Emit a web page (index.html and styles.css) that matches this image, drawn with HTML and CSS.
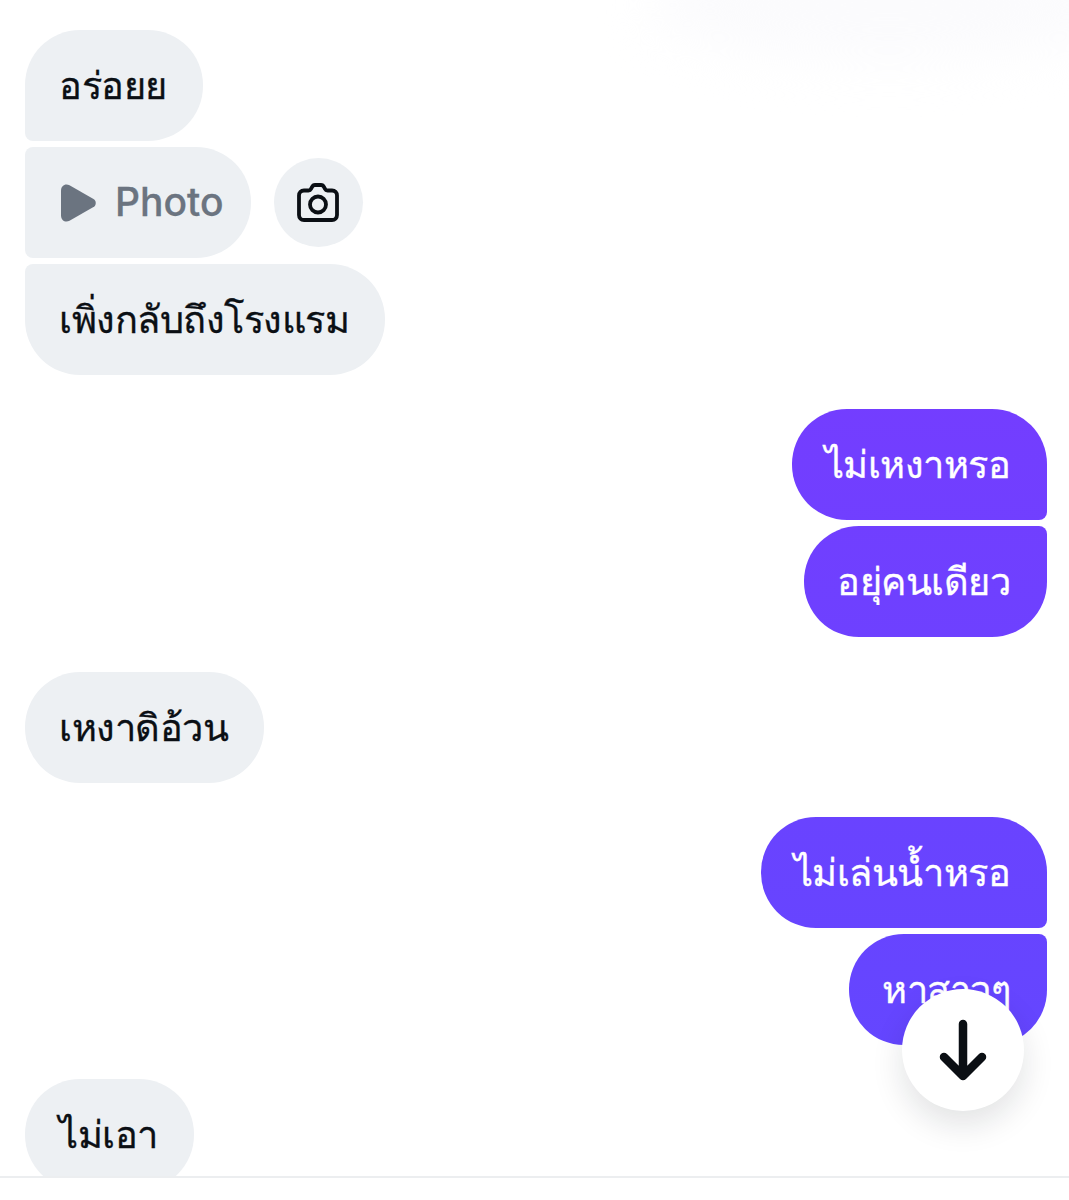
FILE: index.html
```html
<html>
<head>
  <title>Chat</title>
  <link rel="stylesheet" href="styles.css">
</head>
<body>
  <div class="chat">
    <div class="glow"></div>
    <div class="group">
      <div class="row"><div class="bubble them first">อร่อยย</div></div>
      <div class="row">
        <div class="bubble them middle photo">
          <svg class="play" viewBox="0 0 36 38"><path d="M0 6.500C0 1.500 4.500-1 8.500 1.200L32.500 15c3 1.800 3 6.200 0 8L8.500 36.800C4.500 39 0 36.500 0 31.500Z"/></svg>
          <span>Photo</span>
        </div>
        <div class="camera">
          <svg viewBox="0 0 42 39" fill="none" stroke="#0b0f14" stroke-width="3.800" stroke-linejoin="round"><path d="M7 7.500h4.500c1.200 0 2-.6 2.500-1.600l.8-1.600c.6-1.200 1.500-2.300 3.200-2.300h6c1.700 0 2.600 1.100 3.200 2.300l.8 1.600c.5 1 1.300 1.600 2.500 1.600H35c3 0 5 2 5 5V32c0 3-2 5-5 5H7c-3 0-5-2-5-5V12.500c0-3 2-5 5-5Z"/><circle cx="21" cy="21.500" r="8"/></svg>
        </div>
      </div>
      <div class="row"><div class="bubble them last">เพิ่งกลับถึงโรงแรม</div></div>
    </div>
    <div class="group mine">
      <div class="row"><div class="bubble me first">ไม่เหงาหรอ</div></div>
      <div class="row"><div class="bubble me last">อยุ่คนเดียว</div></div>
    </div>
    <div class="group">
      <div class="row"><div class="bubble them single">เหงาดิอ้วน</div></div>
    </div>
    <div class="group mine">
      <div class="row"><div class="bubble me first">ไม่เล่นน้ำหรอ</div></div>
      <div class="row"><div class="bubble me last">หาสาวๆ</div></div>
    </div>
    <div class="group">
      <div class="row"><div class="bubble them single">ไม่เอา</div></div>
    </div>
    <button class="scroll-down">
      <svg viewBox="0 0 48 64" fill="none" stroke="#0b0f14" stroke-width="8.500" stroke-linecap="round" stroke-linejoin="round"><path d="M24 6v52M5 39l19 19 19-19"/></svg>
    </button>
  </div>
</body>
</html>
```

FILE: styles.css
```css
body {
  margin: 0;
  background: #fff;
  font-family: "Inter", "Noto Sans", "DejaVu Sans", sans-serif;
}

.chat {
  position: relative;
  height: 1178px;
  padding: 30px 22px 0 25px;
  box-sizing: border-box;
  overflow: hidden;
  border-bottom: 2px solid #eceef0;
  display: flex;
  flex-direction: column;
  gap: 34.3px;
}

/* blurred header fading out at the top */
.glow {
  position: absolute;
  top: -50px;
  right: -60px;
  width: 480px;
  height: 110px;
  border-radius: 50%;
  background: #fbfbfd;
  filter: blur(24px);
}

.group {
  position: relative;
  display: flex;
  flex-direction: column;
  gap: 6px;
}

.row {
  display: flex;
  align-items: center;
  gap: 23px;
}

.mine .row {
  justify-content: flex-end;
}

.bubble {
  height: 111px;
  box-sizing: border-box;
  padding: 0 36px 0 34px;
  display: flex;
  align-items: center;
  font-size: 38px;
  letter-spacing: -0.5px;
  -webkit-text-stroke: 0.3px;
  white-space: nowrap;
  flex: none;
}

.them {
  background: #edf0f3;
  color: #0b0f14;
}

.me {
  padding: 0 37px 0 33px;
  color: #fff;
  background: linear-gradient(180deg, #7d38ff 0, #6446ff 1050px) fixed;
}

.them.first { border-radius: 55px 55px 55px 8px; }
.them.middle { border-radius: 8px 55px 55px 8px; }
.them.last { border-radius: 8px 55px 55px 55px; }
.them.single { border-radius: 55px; }
.me.first { border-radius: 55px 55px 8px 55px; }
.me.last { border-radius: 55px 8px 55px 55px; }

.photo {
  padding: 0 27px 0 36px;
  gap: 18px;
  color: #6b7480;
  font-size: 39px;
  font-weight: 500;
  letter-spacing: 0;
}

.photo span {
  margin-top: -2px;
}

.play {
  width: 36px;
  height: 38px;
  fill: #6b7480;
}

.camera {
  width: 89px;
  height: 89px;
  border-radius: 50%;
  background: #edf0f3;
  display: flex;
  align-items: center;
  justify-content: center;
}

.camera svg {
  width: 42px;
  height: 39px;
}

.scroll-down {
  position: absolute;
  left: 902px;
  top: 989px;
  width: 122px;
  height: 122px;
  border: none;
  border-radius: 50%;
  background: #fff;
  box-shadow: 0 14px 32px rgba(20, 25, 35, 0.12);
  display: flex;
  align-items: center;
  justify-content: center;
  padding: 0;
}

.scroll-down svg {
  width: 48px;
  height: 64px;
}
```
